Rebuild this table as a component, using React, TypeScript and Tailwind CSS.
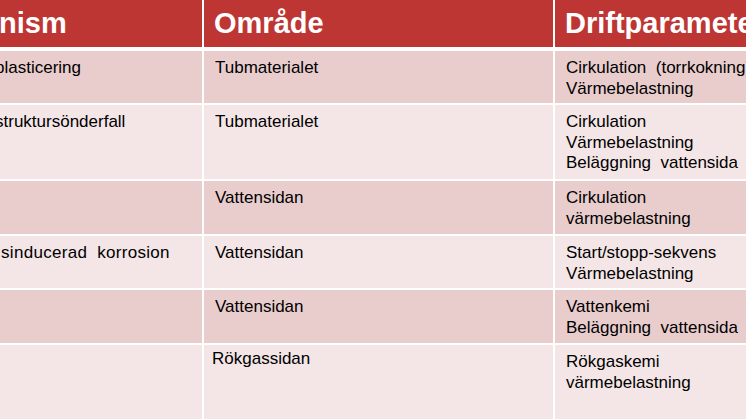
const rows = [
  {
    h: "h-[52px]",
    bg: "bg-[#e9cdcd]",
    mech: { text: "plasticering", shift: "-ml-[5px]" },
    area: "Tubmaterialet",
    params: ["Cirkulation\u00a0 (torrkokning)", "Värmebelastning"],
  },
  {
    h: "h-[74px]",
    bg: "bg-[#f4e6e6]",
    mech: { text: "struktursönderfall", shift: "-ml-[5px]" },
    area: "Tubmaterialet",
    params: ["Cirkulation", "Värmebelastning", "Beläggning\u00a0 vattensida"],
  },
  {
    h: "h-[53px]",
    bg: "bg-[#e9cdcd]",
    mech: { text: "", shift: "" },
    area: "Vattensidan",
    params: ["Cirkulation", "värmebelastning"],
  },
  {
    h: "h-[52px]",
    bg: "bg-[#f4e6e6]",
    mech: { text: "sinducerad\u00a0 korrosion", shift: "ml-[1px] tracking-[0.3px]" },
    area: "Vattensidan",
    params: ["Start/stopp-sekvens", "Värmebelastning"],
  },
  {
    h: "h-[53px]",
    bg: "bg-[#e9cdcd]",
    mech: { text: "", shift: "" },
    area: "Vattensidan",
    params: ["Vattenkemi", "Beläggning\u00a0 vattensida"],
  },
];

function Cell({ bg, className = "", children }: { bg: string; className?: string; children?: React.ReactNode }) {
  return <div className={`${bg} overflow-hidden whitespace-nowrap ${className}`}>{children}</div>;
}

export default function App() {
  return (
    <div
      className="w-[746px] h-[419px] overflow-hidden bg-white text-black"
      style={{ fontFamily: '"Liberation Sans", Arial, sans-serif' }}
    >
      <div className="flex w-[820px] flex-col gap-[2px]">
        {/* Header */}
        <div className="mb-[2px] grid h-[47px] grid-cols-[202px_349px_265px] gap-x-[2px] text-[29px] font-bold leading-none text-white">
          <Cell bg="bg-[#be3633]" className="flex items-center">
            <span className="-ml-[1px]">nism</span>
          </Cell>
          <Cell bg="bg-[#be3633]" className="flex items-center px-[10px]">
            Område
          </Cell>
          <Cell bg="bg-[#be3633]" className="flex items-center px-[10px]">
            Driftparameter
          </Cell>
        </div>

        {/* Body rows */}
        {rows.map((r, i) => (
          <div key={i} className={`grid ${r.h} grid-cols-[202px_349px_265px] gap-x-[2px] text-[17px] leading-[20.5px]`}>
            <Cell bg={r.bg} className="pt-[7px]">
              <span className={`inline-block ${r.mech.shift}`}>{r.mech.text}</span>
            </Cell>
            <Cell bg={r.bg} className="px-[11px] pt-[7px]">
              {r.area}
            </Cell>
            <Cell bg={r.bg} className="px-[11px] pt-[7px]">
              {r.params.map((p) => (
                <div key={p}>{p}</div>
              ))}
            </Cell>
          </div>
        ))}

        {/* Last row */}
        <div className="grid h-[80px] grid-cols-[202px_349px_265px] gap-x-[2px] text-[17px] leading-[21px]">
          <Cell bg="bg-[#f4e6e6]" />
          <Cell bg="bg-[#f4e6e6]" className="px-[8px] pt-[3px]">
            Rökgassidan
          </Cell>
          <Cell bg="bg-[#f4e6e6]" className="px-[11px] pt-[6px]">
            <div>Rökgaskemi</div>
            <div>värmebelastning</div>
          </Cell>
        </div>
      </div>
    </div>
  );
}
